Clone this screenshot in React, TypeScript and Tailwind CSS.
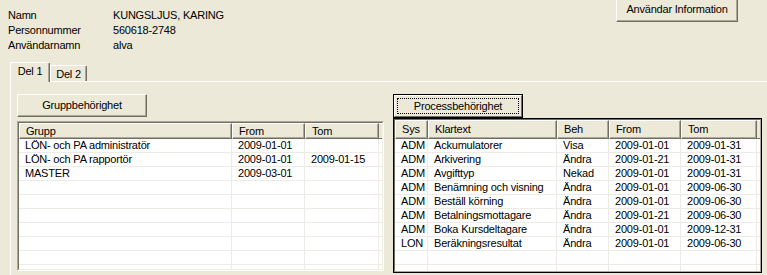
import type { ReactNode } from 'react';

type Column = { label: string; w: string };

const groupColumns: Column[] = [
  { label: 'Grupp', w: 'w-[213px]' },
  { label: 'From', w: 'w-[73px]' },
  { label: 'Tom', w: 'w-[74px]' },
];

const processColumns: Column[] = [
  { label: 'Sys', w: 'w-[33px]' },
  { label: 'Klartext', w: 'w-[129px]' },
  { label: 'Beh', w: 'w-[52px]' },
  { label: 'From', w: 'w-[72px]' },
  { label: 'Tom', w: 'w-[76px]' },
];

const groups = [
  ['LÖN- och PA administratör', '2009-01-01', ''],
  ['LÖN- och PA rapportör', '2009-01-01', '2009-01-15'],
  ['MASTER', '2009-03-01', ''],
];

const processes = [
  ['ADM', 'Ackumulatorer', 'Visa', '2009-01-01', '2009-01-31'],
  ['ADM', 'Arkivering', 'Ändra', '2009-01-21', '2009-01-31'],
  ['ADM', 'Avgifttyp', 'Nekad', '2009-01-01', '2009-01-31'],
  ['ADM', 'Benämning och visning', 'Ändra', '2009-01-01', '2009-06-30'],
  ['ADM', 'Beställ körning', 'Ändra', '2009-01-01', '2009-06-30'],
  ['ADM', 'Betalningsmottagare', 'Ändra', '2009-01-21', '2009-06-30'],
  ['ADM', 'Boka Kursdeltagare', 'Ändra', '2009-01-01', '2009-12-31'],
  ['LON', 'Beräkningsresultat', 'Ändra', '2009-01-01', '2009-06-30'],
];

function ClassicButton({ children, className }: { children: ReactNode; className: string }) {
  return (
    <button
      className={`flex items-center justify-center border border-t-white border-l-white border-r-[#716F64] border-b-[#716F64] bg-[#ECE9D8] leading-[13px] shadow-[inset_-1px_-1px_0_#ACA899] ${className}`}
    >
      {children}
    </button>
  );
}

function DefaultButton({ children }: { children: ReactNode }) {
  return (
    <button className="h-[24px] w-[130px] border border-black bg-[#ECE9D8]">
      <div className="h-full border border-t-white border-l-white border-r-[#716F64] border-b-[#716F64] p-[2px]">
        <div className="flex h-full items-center justify-center border border-dotted border-black leading-[13px]">
          {children}
        </div>
      </div>
    </button>
  );
}

function ListView({
  columns,
  rows,
  focused,
}: {
  columns: Column[];
  rows: string[][];
  focused?: boolean;
}) {
  const lines = Array.from({ length: 10 }, (_, i) => rows[i] ?? columns.map(() => ''));

  return (
    <div
      className={
        focused
          ? 'h-[155px] border border-black'
          : 'mt-[4px] h-[150px] border border-t-[#ACA899] border-l-[#ACA899] border-r-white border-b-white'
      }
    >
      <div
        className={
          focused
            ? 'h-full overflow-hidden border border-t-[#716F64] border-l-[#716F64] border-r-[#ACA899] border-b-[#ACA899] bg-white'
            : 'h-full overflow-hidden border border-t-[#716F64] border-l-[#716F64] border-r-[#F1EFE2] border-b-[#F1EFE2] bg-white'
        }
      >
        <div className={`flex bg-[#ECE9D8] ${focused ? 'h-[19px]' : 'h-[16px]'}`}>
          {columns.map((col) => (
            <div
              key={col.label}
              className={`${col.w} flex shrink-0 items-center border border-t-white border-l-white border-r-[#716F64] border-b-[#716F64] pl-[6px] leading-[13px] shadow-[inset_-1px_-1px_0_#ACA899]`}
            >
              {col.label}
            </div>
          ))}
          <div className="flex-1 border-t border-b border-t-white border-b-[#716F64]" />
        </div>
        {lines.map((row, i) => (
          <div key={i} className="flex h-[14px] border-b border-[#ECEBE6]">
            {columns.map((col, j) => (
              <div
                key={col.label}
                className={`${col.w} shrink-0 overflow-hidden whitespace-nowrap border-r border-[#ECEBE6] pl-[6px] leading-[13px]`}
              >
                {row[j]}
              </div>
            ))}
          </div>
        ))}
      </div>
    </div>
  );
}

export default function App() {
  return (
    <div className="flex h-[275px] w-[767px] flex-col overflow-hidden bg-[#ECE9D8] font-['Liberation_Sans',Arial,sans-serif] text-[11px] tracking-[-0.2px] text-black">
      <div className="flex h-[62px] shrink-0 items-start justify-between">
        <div className="grid grid-cols-[105px_auto] pl-[8px] pt-[8px] leading-[15px]">
          <span>Namn</span>
          <span>KUNGSLJUS, KARING</span>
          <span>Personnummer</span>
          <span>560618-2748</span>
          <span>Användarnamn</span>
          <span>alva</span>
        </div>
        <ClassicButton className="mr-[29px] mt-[-3px] h-[25px] w-[122px]">Användar Information</ClassicButton>
      </div>

      <div className="flex h-[19px] shrink-0 items-end pl-[10px]">
        <div className="relative z-10 -mb-px h-[20px] w-[40px] rounded-t-[2px] border-t border-l border-r border-t-white border-l-white border-r-[#716F64] bg-[#ECE9D8] pt-[2px] text-center leading-[13px] shadow-[inset_-1px_0_0_#ACA899]">
          Del 1
        </div>
        <div className="h-[16px] w-[37px] rounded-t-[2px] border-t border-l border-r border-t-white border-l-white border-r-[#716F64] pt-[2px] text-center leading-[13px] shadow-[inset_-1px_0_0_#ACA899]">
          Del 2
        </div>
      </div>

      <div className="ml-[10px] flex flex-1 gap-[9px] border-t border-l border-white pl-[6px] pt-[12px]">
        <div className="flex w-[367px] shrink-0 flex-col">
          <ClassicButton className="h-[23px] w-[130px]">Gruppbehörighet</ClassicButton>
          <ListView columns={groupColumns} rows={groups} />
        </div>
        <div className="flex w-[369px] shrink-0 flex-col">
          <DefaultButton>Processbehörighet</DefaultButton>
          <ListView columns={processColumns} rows={processes} focused />
        </div>
      </div>
    </div>
  );
}
